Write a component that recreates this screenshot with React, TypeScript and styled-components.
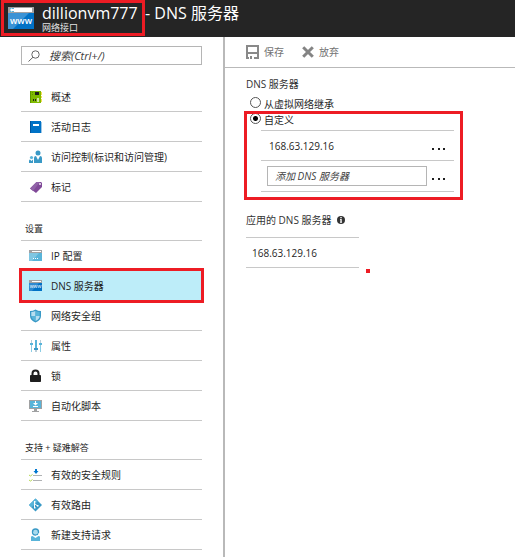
import React, { useState } from "react";
import styled, { createGlobalStyle, css } from "styled-components";

const RED = "#ed1c24";
const LINE = "#c8c8c8";

const GlobalStyle = createGlobalStyle`
  *, *::before, *::after { box-sizing: border-box; }
  body {
    margin: 0;
    background: #fff;
    color: #1f1f1f;
    font: 10px/14px "Open Sans", "Noto Sans CJK SC", sans-serif;
  }
  h1, h2, p, ul { margin: 0; padding: 0; font-weight: 400; }
  ul { list-style: none; }
  button, input { font: inherit; color: inherit; }
  svg { display: block; flex: none; }
`;

const Page = styled.div`
  display: flex;
  flex-direction: column;
  min-height: 100vh;
`;

const Header = styled.header`
  display: flex;
  height: 37px;
  padding-left: 1px;
  background: #252525;
  color: #fff;
`;

const Resource = styled.div`
  display: flex;
  width: 144px;
  height: 36px;
  padding: 4px 0 0 4px;
  gap: 8px;
  border: 3px solid ${RED};
`;

const ResourceText = styled.div`
  margin-top: -4px;
`;

const Title = styled.h1`
  font-size: 16px;
  line-height: 20px;
  white-space: nowrap;
`;

const Subtitle = styled.p`
  color: #e4e4e4;
  font-size: 9px;
  line-height: 10px;
`;

const BladeTitle = styled(Title)`
  padding-top: 3px;
`;

const Columns = styled.div`
  display: flex;
  flex: 1;
`;

const Sidebar = styled.nav`
  flex: none;
  width: 225px;
  padding: 9px 21px 0;
  border-right: 2px solid #b9b9b9;
`;

const SearchBox = styled.label`
  display: flex;
  align-items: center;
  gap: 9px;
  height: 19px;
  margin-bottom: 17px;
  padding-left: 6px;
  border: 1px solid #b5b5b5;
  font-size: 11px;
`;

const PlainInput = styled.input`
  flex: 1;
  min-width: 0;
  padding: 0;
  border: 0;
  outline: 0;
  background: transparent;
  &::placeholder {
    color: #404040;
    font-style: italic;
    opacity: 1;
  }
`;

const GroupTitle = styled.h2`
  height: 39px;
  padding: 20px 0 0 4px;
  border-bottom: 1px solid ${LINE};
  font-size: 9px;
  line-height: 14px;
`;

const MenuItem = styled.li`
  position: relative;
`;

const MenuLink = styled.a<{ $active?: boolean }>`
  display: flex;
  align-items: center;
  gap: 8px;
  height: 30px;
  padding-left: 8px;
  border-bottom: 1px solid ${LINE};
  color: inherit;
  text-decoration: none;
  ${(p) => p.$active && css`
    background: #bdedf9;
    &::after {
      content: "";
      position: absolute;
      inset: -3px -2px -2px;
      border: 3px solid ${RED};
    }
  `}
`;

const Main = styled.main`
  flex: 1;
  min-width: 0;
`;

const Toolbar = styled.div`
  display: flex;
  gap: 18px;
  height: 31px;
  padding-left: 21px;
  border-bottom: 1px solid #b9b9b9;
`;

const ToolButton = styled.button`
  display: flex;
  align-items: center;
  gap: 5px;
  padding: 0;
  border: 0;
  background: none;
  color: #737373;
`;

const Settings = styled.div`
  padding: 8px 21px 0;
`;

const FieldTitle = styled.h2`
  display: flex;
  align-items: center;
  gap: 6px;
  font-size: 10px;
  line-height: 16px;
  color: #333;
`;

const Choice = styled.label`
  display: flex;
  align-items: center;
  gap: 3px;
  height: 16px;
  padding-left: 4px;
`;

const Radio = styled.input`
  appearance: none;
  width: 11px;
  height: 11px;
  margin: 0 0 3px;
  border: 1px solid #555;
  border-radius: 50%;
  background: #fff;
  &:checked {
    background: radial-gradient(circle, #000 0 2px, #fff 3px);
  }
`;

const Choices = styled.div`
  padding-top: 4px;
`;

const CustomBlock = styled.div`
  position: relative;
  width: 219px;
  &::after {
    content: "";
    position: absolute;
    inset: -1px 2px -8px -2px;
    border: 3px solid ${RED};
    pointer-events: none;
  }
`;

const ServerList = styled.ul`
  margin: 2px 11px 0 15px;
  border-top: 1px solid ${LINE};
`;

const ServerRow = styled.li`
  display: flex;
  align-items: center;
  justify-content: space-between;
  height: 30px;
  padding: 0 8px;
  border-bottom: 1px solid ${LINE};
`;

const AddRow = styled(ServerRow)`
  height: 31px;
  padding-left: 6px;
`;

const AddInput = styled(PlainInput)`
  flex: none;
  width: 160px;
  height: 20px;
  padding-left: 7px;
  border: 1px solid #b5b5b5;
`;

const MoreButton = styled.button`
  padding: 7px 0 0;
  border: 0;
  background: none;
`;

const Applied = styled.section`
  padding-top: 20px;
`;

const AppliedRow = styled.div`
  display: flex;
  align-items: flex-end;
  gap: 7px;
`;

const AppliedList = styled.ul`
  width: 113px;
  margin-top: 9px;
  border-top: 1px solid ${LINE};
`;

const AppliedItem = styled.li`
  height: 30px;
  padding-left: 6px;
  border-bottom: 1px solid ${LINE};
  line-height: 30px;
`;

const Marker = styled.span`
  width: 4px;
  height: 4px;
  margin-bottom: -5px;
  background: ${RED};
`;

const Icon = ({ children }: { children: React.ReactNode }) => (
  <svg width="14" height="14" viewBox="0 0 14 14" aria-hidden="true">{children}</svg>
);

const ResourceIcon = () => (
  <svg width="26" height="22" viewBox="0 0 26 22" aria-hidden="true">
    <path fill="#a0a1a2" d="M0 0h26v6H0z" />
    <path fill="#59b4d9" d="M2 1h4v4H2z" />
    <path fill="#fff" d="M6 1h18v4H6zM2 3l2-2v1h2v2H4v1z" />
    <path fill="#0072c6" d="M0 6h26v16H0z" />
    <path fill="#3b93d5" d="M0 6h21L5 22H0z" />
    <text x="13" y="17" fill="#fff" fontSize="9" fontWeight="600" textAnchor="middle">www</text>
  </svg>
);

const Glyphs = {
  overview: (
    <Icon>
      <path fill="#f5dc53" d="M12 2h1v3h-1zM12 6h1v2h-1zM12 9h1v3h-1z" />
      <path fill="#7fba00" d="M1 1h11v12H1z" />
      <path fill="#5e9300" d="M1 1h1v12H1zM3 2h1v1H3zM3 4h1v1H3z" />
      <path fill="#1e1e1e" d="M6 2h4v3H6zM4 9h1v2H4zM6 9h1v2H6z" />
      <path fill="#d4e9aa" d="M8 8h2v4H8z" />
    </Icon>
  ),
  log: (
    <Icon>
      <path fill="#a0c8e6" d="M12 2h1v11h-1z" />
      <path fill="#0072c6" d="M1 1h11v12H1z" />
      <path fill="#00559d" d="M1 1h1v12H1z" />
      <path fill="#fff" d="M4 4h6v2H4z" />
    </Icon>
  ),
  access: (
    <Icon>
      <circle cx="9" cy="3" r="2.500" fill="#3999c6" />
      <path fill="#3999c6" d="M5 13V8q0-2 2-2h4q2 0 2 2v5z" />
      <path fill="#fff" d="M7 6h4L9 10z" />
      <circle cx="2.500" cy="7.500" r="1.600" fill="#59b4d9" />
      <path fill="#3999c6" d="M0 13v-2q0-1.500 1-1.500L2.500 11 4 9.500v3.500z" />
    </Icon>
  ),
  tag: (
    <Icon>
      <path fill="#804998" d="M7.500 2H12l1 1v4l-6 6L1 8.500z" />
      <path fill="#9163a8" d="M7.500 2H11l-7 9-3-2.500z" />
      <circle cx="11" cy="4" r=".9" fill="#fff" />
    </Icon>
  ),
  ip: (
    <Icon>
      <path fill="#a0a1a2" d="M0 1h13v3H0z" />
      <path fill="#fff" d="M3 2h9v1H3z" />
      <path fill="#59b4d9" d="M0 4h13v8H0z" />
      <path fill="#7fc6e2" d="M0 4h10l-7 8H0z" />
      <path fill="#fff" d="M4 9h1v1H4zM6 9h1v1H6zM8 9h1v1H8z" />
    </Icon>
  ),
  dns: (
    <Icon>
      <path fill="#a0a1a2" d="M0 1h13v3H0z" />
      <path fill="#fff" d="M3 2h9v1H3z" />
      <path fill="#0072c6" d="M0 4h13v8H0z" />
      <path fill="#2f8ad0" d="M0 4h10l-7 8H0z" />
      <text x="6.500" y="9" fill="#fff" fontSize="5" textAnchor="middle">www</text>
    </Icon>
  ),
  shield: (
    <Icon>
      <path fill="#3999c6" d="M6.500.5Q9 2 12 2v5q0 4-5.500 6.500Q1 11 1 7V2q3 0 5.500-1.500z" />
      <path fill="#b8dff0" d="M6.500 2v5H2.300V3q2 0 4.200-1zM6.500 7h4.200q0 3-4.200 5z" />
      <path fill="#59b4d9" d="M6.500 2q2 1 4.200 1v4H6.500zM2.300 7h4.200v5Q2.500 10 2.300 7z" />
    </Icon>
  ),
  sliders: (
    <Icon>
      <path fill="#b9cdd8" d="M2 1h1v12H2zM6 1h2v12H6zM11 1h1v12h-1z" />
      <path fill="#59b4d9" d="M1 4h3v2H1zM6 1h2v8H6zM10 4h3v2h-3z" />
      <path fill="#3999c6" d="M5 9h4v2H5z" />
      <path fill="#8bcde5" d="M2 6h1v7H2zM11 6h1v7h-1z" />
    </Icon>
  ),
  lock: (
    <Icon>
      <path fill="none" stroke="#1e1e1e" strokeWidth="2" d="M3.500 7V4.500a3 3 0 0 1 6 0V7" />
      <rect x="1" y="6" width="11" height="7" rx=".8" fill="#1e1e1e" />
    </Icon>
  ),
  script: (
    <Icon>
      <path fill="#a0a1a2" d="M0 1h13v9H0zM5 10h3v2h2v1H3v-1h2z" />
      <path fill="#59b4d9" d="M1 2h11v7H1z" />
      <path fill="#fff" d="M6 2h1v2h2L6.500 6.500 4 4h2zM4 7h5v1H4z" />
    </Icon>
  ),
  rules: (
    <Icon>
      <path fill="#0078d0" d="M6 1h2v2h1.500L7 6 4.500 3H6z" />
      <path fill="#b0b2b4" d="M4 7h9v1H4zM4 12h9v1H4z" />
      <path fill="none" stroke="#b4d84c" d="m0 7 1.500 1L3.500 6.500M0 12l1.500 1 2-1.500" />
    </Icon>
  ),
  route: (
    <Icon>
      <path fill="#3999c6" d="m6.500.5 6.500 6.500-6.500 6.500L0 7z" />
      <path fill="#59b4d9" d="M6.500.5 9 3 2.500 9.500 0 7z" />
      <path fill="none" stroke="#fff" d="M5.500 3.500v6M5.500 5.500l3 2.500" />
      <path fill="#fff" d="M5 3h1.500v1.500H5zM5 9h1.500v1.500H5zM8 7h1.500v1.500H8z" />
    </Icon>
  ),
  support: (
    <Icon>
      <circle cx="6.500" cy="4" r="3.700" fill="#3999c6" />
      <circle cx="6.500" cy="4.200" r="2.400" fill="#a9dbee" />
      <path fill="#59b4d9" d="M2 13V9q0-1 1.500-1L6.500 10l3-2Q11 8 11 9v4z" />
      <path fill="none" stroke="#fff" strokeWidth=".8" d="M10 5q0 3-3 3" />
    </Icon>
  ),
};

const SearchIcon = () => (
  <svg width="12" height="12" viewBox="0 0 12 12" fill="none" stroke="#666" aria-hidden="true">
    <circle cx="7.500" cy="4.500" r="3.700" />
    <path d="M5 7.200.5 11.500" />
  </svg>
);

const SaveIcon = () => (
  <svg width="13" height="14" viewBox="0 0 13 14" aria-hidden="true">
    <path fill="none" stroke="#898989" strokeWidth="2" d="M3 13H1V1h11v12h-1" />
    <path fill="#898989" d="M2 7h9v2H2zM4 11h2v3H4zM8 12h3v2H8z" />
  </svg>
);

const DiscardIcon = () => (
  <svg width="12" height="12" viewBox="0 0 12 12" aria-hidden="true">
    <path stroke="#848484" strokeWidth="3" d="m1.200 1.200 9.600 9.600m0-9.600-9.600 9.600" />
  </svg>
);

const InfoIcon = () => (
  <svg width="8" height="8" viewBox="0 0 8 8" aria-hidden="true">
    <circle cx="4" cy="4" r="4" fill="#333" />
    <path fill="#fff" d="M3.300 1h1.400v1.200H3.300zM3 3h1.700v2.800H5v.9H3v-.9h.4V3.800H3z" />
  </svg>
);

const Dots = () => (
  <svg width="15" height="3" viewBox="0 0 15 3" fill="#1f1f1f" aria-hidden="true">
    <rect x="1" y="0" width="2" height="2" />
    <rect x="7" y="0" width="2" height="2" />
    <rect x="12" y="0" width="2" height="2" />
  </svg>
);

type Entry = { icon: keyof typeof Glyphs; label: string; active?: boolean };

const groups: { title?: string; items: Entry[] }[] = [
  {
    items: [
      { icon: "overview", label: "概述" },
      { icon: "log", label: "活动日志" },
      { icon: "access", label: "访问控制(标识和访问管理)" },
      { icon: "tag", label: "标记" },
    ],
  },
  {
    title: "设置",
    items: [
      { icon: "ip", label: "IP 配置" },
      { icon: "dns", label: "DNS 服务器", active: true },
      { icon: "shield", label: "网络安全组" },
      { icon: "sliders", label: "属性" },
      { icon: "lock", label: "锁" },
      { icon: "script", label: "自动化脚本" },
    ],
  },
  {
    title: "支持 + 疑难解答",
    items: [
      { icon: "rules", label: "有效的安全规则" },
      { icon: "route", label: "有效路由" },
      { icon: "support", label: "新建支持请求" },
    ],
  },
];

export default function App() {
  const [mode, setMode] = useState("custom");
  return (
    <>
      <GlobalStyle />
      <Page>
        <Header>
          <Resource>
            <ResourceIcon />
            <ResourceText>
              <Title>dillionvm777</Title>
              <Subtitle>网络接口</Subtitle>
            </ResourceText>
          </Resource>
          <BladeTitle as="p">- DNS 服务器</BladeTitle>
        </Header>
        <Columns>
          <Sidebar>
            <SearchBox>
              <SearchIcon />
              <PlainInput type="search" aria-label="搜索" placeholder="搜索(Ctrl+/)" />
            </SearchBox>
            {groups.map((group, i) => (
              <section key={i}>
                {group.title && <GroupTitle>{group.title}</GroupTitle>}
                <ul>
                  {group.items.map((item) => (
                    <MenuItem key={item.icon}>
                      <MenuLink href="#" $active={item.active} aria-current={item.active ? "page" : undefined}>
                        {Glyphs[item.icon]}
                        {item.label}
                      </MenuLink>
                    </MenuItem>
                  ))}
                </ul>
              </section>
            ))}
          </Sidebar>
          <Main>
            <Toolbar>
              <ToolButton type="button"><SaveIcon />保存</ToolButton>
              <ToolButton type="button"><DiscardIcon />放弃</ToolButton>
            </Toolbar>
            <Settings>
              <FieldTitle>DNS 服务器</FieldTitle>
              <Choices role="radiogroup" aria-label="DNS 服务器">
                <Choice>
                  <Radio type="radio" name="dns" checked={mode === "inherit"} onChange={() => setMode("inherit")} />
                  从虚拟网络继承
                </Choice>
                <CustomBlock>
                  <Choice>
                    <Radio type="radio" name="dns" checked={mode === "custom"} onChange={() => setMode("custom")} />
                    自定义
                  </Choice>
                  <ServerList>
                    <ServerRow>
                      168.63.129.16
                      <MoreButton type="button" aria-label="更多"><Dots /></MoreButton>
                    </ServerRow>
                    <AddRow>
                      <AddInput type="text" aria-label="添加 DNS 服务器" placeholder="添加 DNS 服务器" />
                      <MoreButton type="button" aria-label="更多"><Dots /></MoreButton>
                    </AddRow>
                  </ServerList>
                </CustomBlock>
              </Choices>
              <Applied>
                <FieldTitle>应用的 DNS 服务器<InfoIcon /></FieldTitle>
                <AppliedRow>
                  <AppliedList>
                    <AppliedItem>168.63.129.16</AppliedItem>
                  </AppliedList>
                  <Marker />
                </AppliedRow>
              </Applied>
            </Settings>
          </Main>
        </Columns>
      </Page>
    </>
  );
}
